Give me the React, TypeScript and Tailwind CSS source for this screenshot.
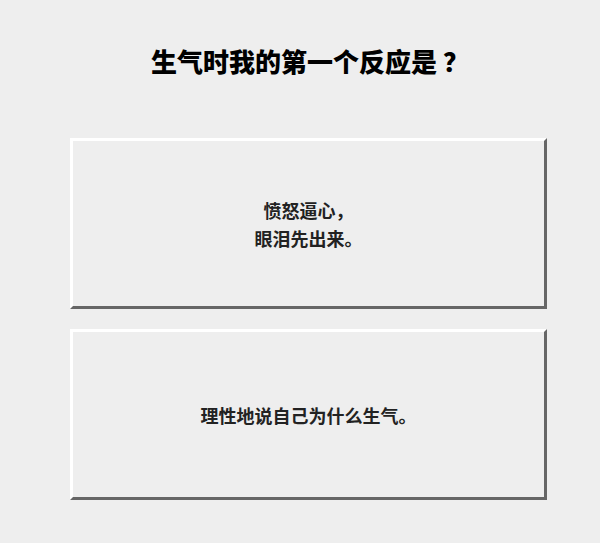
function Punct({ children }: { children: string }) {
  // 全角标点占一个字宽
  return <span className="inline-block w-[1em] text-left">{children}</span>
}

export default function App() {
  const options = [
    ['愤怒逼心', '，', '眼泪先出来', '。'],
    ['理性地说自己为什么生气', '。'],
  ]

  return (
    <div
      lang="zh-CN"
      className="min-h-[543px] w-full bg-[#eeeeee] pt-[43px] pb-[40px]"
      style={{ fontFamily: '"Noto Sans CJK SC", "Noto Sans", sans-serif' }}
    >
      <h1 className="flex justify-center pl-[20px] text-[26px] font-extrabold leading-[36px] text-black">
        <span>生气时我的第一个反应是</span>
        <span className="ml-[6px]">？</span>
      </h1>

      <div className="ml-[70px] mt-[59px] flex w-[477px] flex-col gap-[20px]">
        {options.map((parts, i) => (
          <div
            key={i}
            className="flex h-[171px] flex-col items-center justify-center border-[3px] border-solid border-t-white border-l-white border-r-[#666666] border-b-[#666666] bg-[#eeeeee] text-center text-[18px] font-bold leading-[28px] text-[#222222]"
          >
            {Array.from({ length: parts.length / 2 }).map((_, j) => (
              <div key={j}>
                {parts[j * 2]}
                <Punct>{parts[j * 2 + 1]}</Punct>
              </div>
            ))}
          </div>
        ))}
      </div>
    </div>
  )
}
